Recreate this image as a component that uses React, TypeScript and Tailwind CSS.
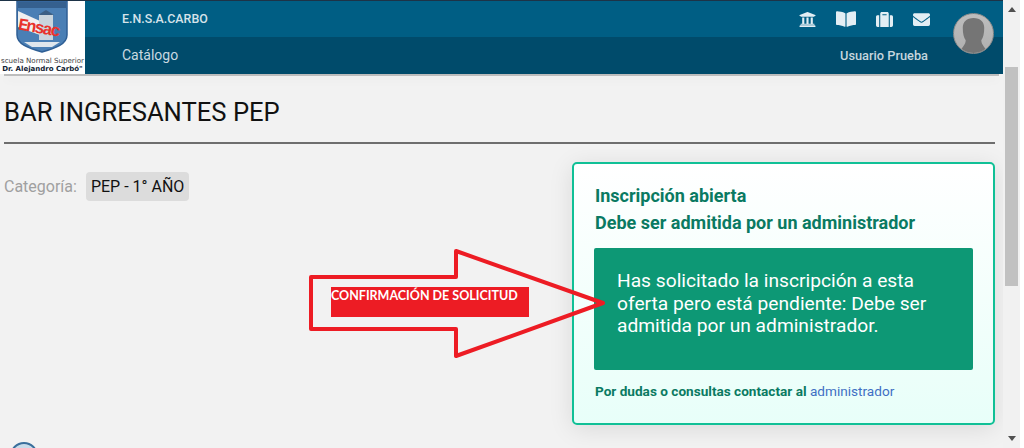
import { FaBookOpen, FaEnvelope, FaSuitcase, FaUniversity } from 'react-icons/fa'

const Logo: React.FC = () => {
  return (
    <div className="relative flex h-full w-[85px] shrink-0 flex-col items-center overflow-hidden bg-white">
      <svg width="52" height="52" viewBox="0 0 52 52" className="ml-[-2px] shrink-0">
        <path d="M1 0H51V34C51 43 40 47 26 51C12 47 1 43 1 34Z" fill="#4a7fb5" stroke="#2f5f95" strokeWidth="1.5" />
        <rect x="2" y="1" width="48" height="6" fill="#35608f" />
        <path d="M2 10L24 20V34L2 26Z" fill="#f0f0f0" />
        <rect x="23" y="13" width="14" height="26" fill="#c9d4dd" />
        <path d="M22 14L30 9L38 14Z" fill="#3c5f85" />
        <path d="M8 41H44L36 46H16Z" fill="#dfe6ec" />
      </svg>
      <span className="absolute top-[19px] left-[18px] rotate-[10deg] font-['Liberation_Mono',monospace] text-[17px] leading-none font-bold tracking-[-2px] text-[#e8322c]">
        Ensac
      </span>
      <div className="mt-[4px] w-[85px] text-center font-['DejaVu_Sans',sans-serif] whitespace-nowrap">
        <p className="text-[7.1px] leading-[8px] text-[#444]">scuela Normal Superior</p>
        <p className="text-[7px] leading-[8px] font-bold text-[#123]">Dr. Alejandro Carbó"</p>
      </div>
    </div>
  )
}

const Avatar: React.FC = () => {
  return (
    <div className="absolute top-[12px] left-[953px] h-[41px] w-[41px] overflow-hidden rounded-full border border-[#8a8a8a] bg-gradient-to-b from-[#bdbdbd] to-[#b0b0b0]">
      <svg viewBox="0 0 40 40" className="h-full w-full">
        <path d="M20 4C13 4 9 8 9 14C9 20 10 24 12 27C12 32 8 34 5 40H35C32 34 28 32 28 27C30 24 31 20 31 14C31 8 27 4 20 4Z" fill="#757575" />
      </svg>
    </div>
  )
}

const Header: React.FC = () => {
  return (
    <header className="relative flex h-[74px] shrink-0 border-t border-[#1d3347] font-['Roboto',sans-serif]">
      <Logo />
      <div className="flex flex-1 flex-col">
        <div className="flex h-[36px] items-center justify-between bg-[#005e84] pr-[73px] pl-[37px]">
          <span className="text-[12.4px] font-medium text-[#d5e3ea]">E.N.S.A.CARBO</span>
          <div className="flex items-center gap-[20px] text-[#e3eef4]">
            <FaUniversity size={17} />
            <FaBookOpen size={20} />
            <FaSuitcase size={17} />
            <FaEnvelope size={17} />
          </div>
        </div>
        <div className="flex h-[37px] items-center justify-between bg-[#004b6b] pr-[75px] pl-[37px]">
          <span className="text-[14px] text-[#c9d9e1]">Catálogo</span>
          <span className="text-[12.8px] font-medium text-[#c5d6de]">Usuario Prueba</span>
        </div>
      </div>
      <Avatar />
    </header>
  )
}

const Arrow: React.FC = () => {
  return (
    <div className="absolute top-[249px] left-[308px]">
      <svg width="306" height="110" viewBox="0 0 306 110" className="block">
        <path
          d="M3 28H148V2L295 54L148 107V80H3Z"
          fill="none"
          stroke="#ed1c24"
          strokeWidth="4"
          strokeLinejoin="round"
        />
      </svg>
      <div className="absolute top-[38px] left-[23px] h-[30px] w-[198px] bg-[#ed1c24] font-['Lato',sans-serif] text-[12.5px] leading-[18px] font-bold whitespace-nowrap text-white">
        CONFIRMACIÓN DE SOLICITUD
      </div>
    </div>
  )
}

const StatusCard: React.FC = () => {
  return (
    <div className="h-[263px] w-[423px] rounded-[5px] border-2 border-[#10c096] bg-gradient-to-b from-white to-[#e8fff9] pt-[18px] pr-[20px] pl-[21px] shadow-[0_4px_24px_rgba(0,0,0,0.1)]">
      <h3 className="text-[18px] leading-[27px] font-bold text-[#0a7a62]">Inscripción abierta</h3>
      <h3 className="text-[18px] leading-[27px] font-bold whitespace-nowrap text-[#0a7a62]">Debe ser admitida por un administrador</h3>
      <div className="mt-[12px] ml-[-1px] h-[122px] w-[379px] rounded-[2px] bg-[#0d9875] px-[23px] pt-[22px] text-[19.2px] leading-[22.5px] text-white">
        Has solicitado la inscripción a esta oferta pero está pendiente: Debe ser admitida por un administrador.
      </div>
      <p className="mt-[11px] text-[13.6px] leading-[20px] text-[#3f6fc4]">
        <span className="font-bold text-[#0a7a62]">Por dudas o consultas contactar al</span> administrador
      </p>
    </div>
  )
}

const Scrollbar: React.FC = () => {
  return (
    <div className="flex h-full w-[17px] shrink-0 flex-col items-center bg-[#f1f1f1]">
      <div className="mt-[7px] h-0 w-0 border-x-[4px] border-b-[5px] border-x-transparent border-b-[#505050]"></div>
      <div className="mt-[55px] h-[219px] w-[13px] bg-[#c1c1c1]"></div>
      <div className="mt-[150px] h-0 w-0 border-x-[4px] border-t-[5px] border-x-transparent border-t-[#505050]"></div>
    </div>
  )
}

export default function App() {
  return (
    <div className="relative flex h-[448px] w-[1024px] overflow-hidden bg-white">
      <div className="flex w-[1003px] shrink-0 flex-col bg-[#f2f2f2] font-['Roboto',sans-serif]">
        <Header />
        <div className="mx-[4px] h-[4px] border-b-2 border-[#bdbdbd] shadow-[0_4px_10px_rgba(0,0,0,0.06)]"></div>
        <div className="flex-1 pt-[21px] pr-[8px] pl-[4px]">
          <h1 className="text-[25.6px] leading-[30px] text-[#111]">BAR INGRESANTES PEP</h1>
          <hr className="mt-[15px] border-t-2 border-[#6e6e6e]" />
          <div className="mt-[18px] flex items-start justify-between">
            <div className="mt-[10px] flex items-center gap-[9px] text-[16px]">
              <span className="text-[#a0a0a0]">Categoría:</span>
              <span className="rounded-[4px] bg-[#dcdcdc] px-[5px] py-[5px] leading-[19px] text-[#111]">PEP - 1° AÑO</span>
            </div>
            <StatusCard />
          </div>
          <div className="mt-[17px] ml-[6px] h-[28px] w-[28px] rounded-full border-2 border-[#3a6f9c] bg-[#c9dcea]"></div>
        </div>
      </div>
      <Scrollbar />
      <Arrow />
    </div>
  )
}
